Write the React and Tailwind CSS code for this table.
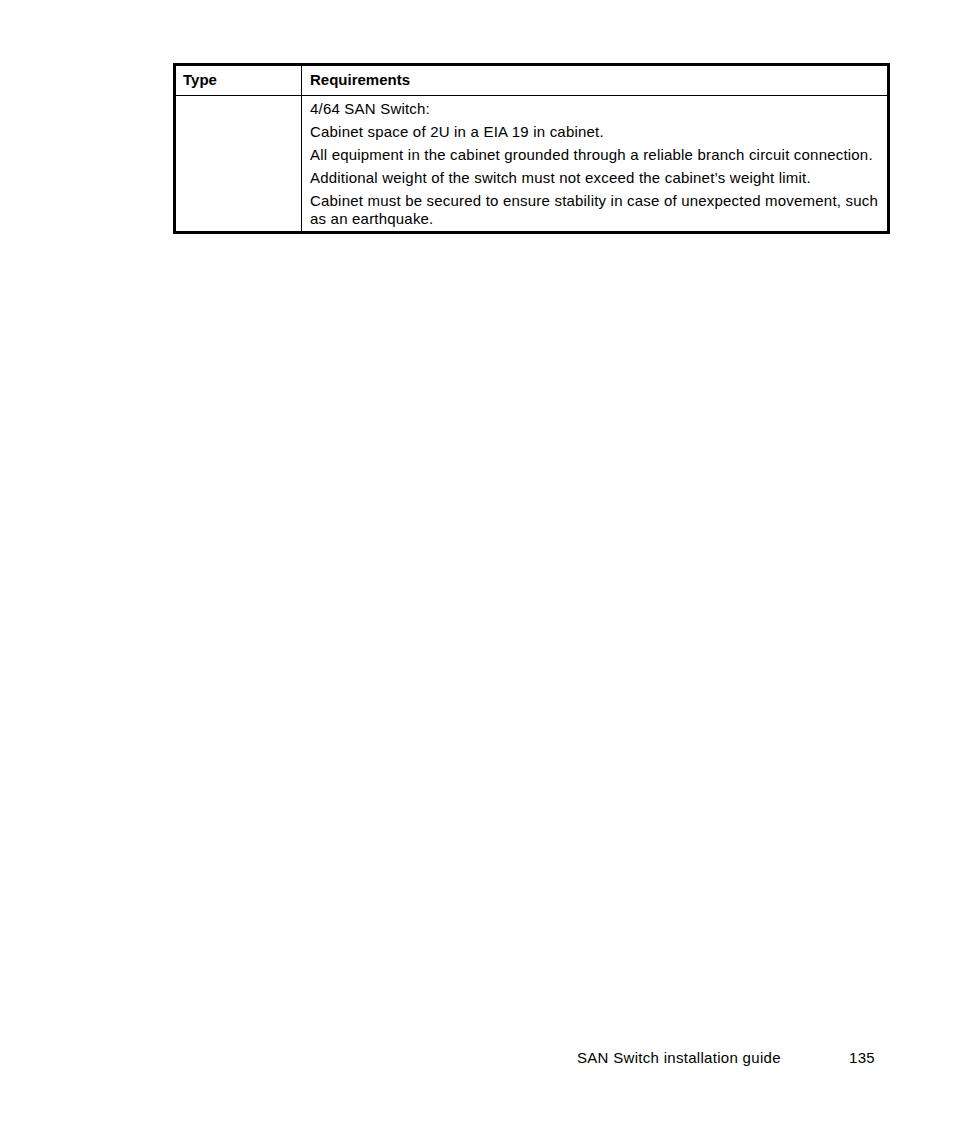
import React from "react";

const rows = [
  "4/64 SAN Switch:",
  "Cabinet space of 2U in a EIA 19 in cabinet.",
  "All equipment in the cabinet grounded through a reliable branch circuit connection.",
  "Additional weight of the switch must not exceed the cabinet\u2019s weight limit.",
  "Cabinet must be secured to ensure stability in case of unexpected movement, such as an earthquake.",
];

const App = () => {
  return (
    <div
      className="w-[954px] h-[1145px] bg-white text-black flex flex-col"
      style={{ fontFamily: '"Liberation Sans", Arial, sans-serif' }}
    >
      <div className="ml-[173px] mt-[63px] w-[717px] border-[3px] border-black">
        <div className="flex border-b border-black h-[30px] items-center text-[15px] font-bold">
          <div className="w-[126px] pl-[7px] border-r border-black h-full flex items-center">Type</div>
          <div className="pl-[8px]">Requirements</div>
        </div>
        <div className="flex text-[15px] tracking-[0.2px]">
          <div className="w-[126px] border-r border-black"></div>
          <div className="flex-1 pl-[8px] pr-0 pt-[4px] pb-[3px] flex flex-col gap-[5px]">
            {rows.map((r) => (
              <p key={r} className="leading-[18px]">
                {r}
              </p>
            ))}
          </div>
        </div>
      </div>
      <div className="mt-auto mb-[76px] flex text-[15px] tracking-[0.3px]">
        <span className="ml-[577px] w-[272px]">SAN Switch installation guide</span>
        <span>135</span>
      </div>
    </div>
  );
};

export default App;
